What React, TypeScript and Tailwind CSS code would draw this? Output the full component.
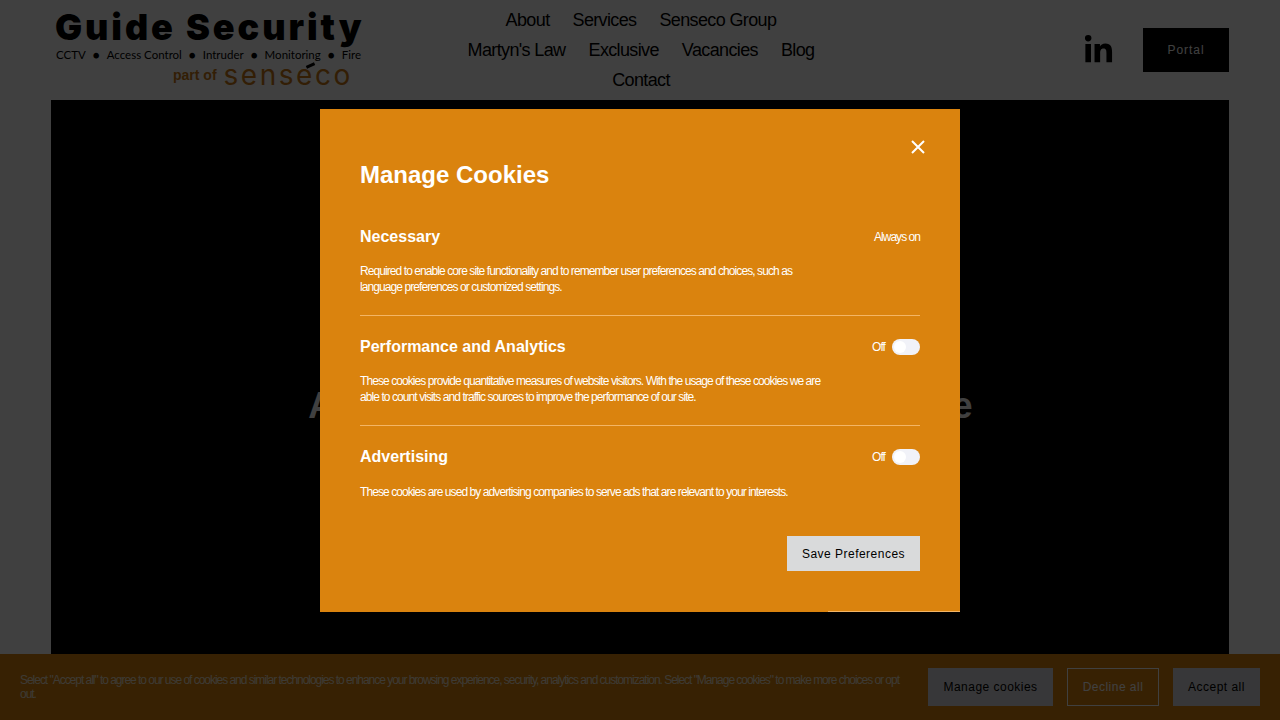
import React from "react";
import { FaLinkedinIn } from "react-icons/fa";

const navRows = [
  ["About", "Services", "Senseco Group"],
  ["Martyn's Law", "Exclusive", "Vacancies", "Blog"],
  ["Contact"],
];

const Toggle = () => (
  <div className="flex items-center gap-[7px]">
    <span className="text-xs tracking-[-0.08em] text-white">Off</span>
    <div className="h-4 w-7 rounded-full bg-[#f1f2f8] p-[2px]">
      <div className="h-3 w-3 rounded-full bg-white" />
    </div>
  </div>
);

const CookieRow = ({
  title,
  right,
  text,
  last,
}: {
  title: string;
  right: React.ReactNode;
  text: React.ReactNode;
  last?: boolean;
}) => (
  <div className={last ? "" : "h-[87px] border-b border-[#f3b565]"}>
    <div className="flex h-4 items-center justify-between">
      <h3 className="text-base font-bold text-white">{title}</h3>
      {right}
    </div>
    <p className={`${last ? "mt-[19px]" : "mt-[18px]"} w-[462px] text-xs leading-4 tracking-[-0.92px] text-white`}>{text}</p>
  </div>
);

const App = () => {
  return (
    <div className="relative h-[720px] overflow-hidden bg-white font-['Liberation_Sans',Arial,sans-serif]">
      <div className="mx-auto w-[1178px]">
        <header className="flex h-[100px] items-center">
          <div className="w-[312px] shrink-0 pl-1 pb-[7px]">
            <div className="font-['Inter',sans-serif] text-[36px] font-black leading-[36px] tracking-[0.081em] whitespace-nowrap text-black">
              Guide Security
            </div>
            <div className="mt-[3px] ml-px flex w-[305px] justify-between whitespace-nowrap font-['Lato',sans-serif] text-[11.5px] leading-[14px] text-black">
              <span>CCTV</span>
              <span>●</span>
              <span>Access Control</span>
              <span>●</span>
              <span>Intruder</span>
              <span>●</span>
              <span>Monitoring</span>
              <span>●</span>
              <span>Fire</span>
            </div>
            <div className="relative mt-[3px] flex items-center gap-[7px] pl-[118px] text-[#c97a16]">
              <span className="text-sm font-bold leading-5">part of</span>
              <span className="font-['Inter',sans-serif] text-[28px] leading-5 tracking-[0.09em]">senseco</span>
              <span className="absolute left-[251px] top-[-1px] h-[3px] w-[9px] -rotate-[25deg] bg-black" />
            </div>
          </div>

          <nav className="ml-[88px] flex w-[380px] flex-col items-center text-lg leading-[30px] tracking-[-0.035em] text-black">
            {navRows.map((row) => (
              <div key={row[0]} className="flex gap-[23px]">
                {row.map((item) => (
                  <a key={item}>{item}</a>
                ))}
              </div>
            ))}
          </nav>

          <div className="ml-auto flex items-center gap-[29px]">
            <FaLinkedinIn className="h-[31px] w-[31px] text-black" />
            <button className="h-11 w-[86px] bg-black text-xs tracking-[0.08em] text-white">
              Portal
            </button>
          </div>
        </header>

        <section className="flex h-[620px] items-start justify-center bg-black pt-[286px]">
          <h1 className="whitespace-nowrap text-[36px] font-bold leading-10 tracking-[-0.92px] text-white">
            Accredited Security Systems Nationwide
          </h1>
        </section>
      </div>

      <div className="absolute inset-x-0 bottom-0 flex h-[66px] items-center gap-[28px] bg-[#da830e] pl-5 pr-5">
        <p className="w-[880px] text-xs leading-[14px] tracking-[-1.03px] text-[#f3e6d2]">
          Select "Accept all" to agree to our use of cookies and similar technologies to enhance your browsing
          experience, security, analytics and customization. Select "Manage cookies" to make more choices or opt out.
        </p>
        <div className="flex gap-[14px] text-xs tracking-[0.04em]">
          <button className="h-[38px] w-[125px] bg-[#dcdce2] text-black">Manage cookies</button>
          <button className="h-[38px] w-[92px] border border-white text-white">Decline all</button>
          <button className="h-[38px] w-[87px] bg-[#dcdce2] text-black">Accept all</button>
        </div>
      </div>

      <div className="absolute inset-0 bg-black/75" />

      <div className="absolute left-[320px] top-[109px] h-[503px] w-[640px] bg-[#da830e] px-10 pt-[51px] text-white">
        <svg className="absolute right-[34px] top-[30px] h-4 w-4" viewBox="0 0 16 16" fill="none" stroke="white" strokeWidth="2">
          <path d="M2 2l12 12M14 2L2 14" />
        </svg>
        <h2 className="text-2xl font-bold leading-[30px]">Manage Cookies</h2>
        <div className="mt-[39px]">
          <CookieRow
            title="Necessary"
            right={<span className="text-xs tracking-[-0.08em] text-white">Always on</span>}
            text="Required to enable core site functionality and to remember user preferences and choices, such as language preferences or customized settings."
          />
          <div className="mt-[23px]">
            <CookieRow
              title="Performance and Analytics"
              right={<Toggle />}
              text="These cookies provide quantitative measures of website visitors. With the usage of these cookies we are able to count visits and traffic sources to improve the performance of our site."
            />
          </div>
          <div className="mt-[23px]">
            <CookieRow
              last
              title="Advertising"
              right={<Toggle />}
              text={<span className="whitespace-nowrap">These cookies are used by advertising companies to serve ads that are relevant to your interests.</span>}
            />
          </div>
        </div>
        <div className="mt-[36px] flex justify-end">
          <button className="h-[35px] w-[133px] bg-[#d9dadb] text-xs tracking-[0.04em] text-black">
            Save Preferences
          </button>
        </div>
        <div className="absolute bottom-0 right-0 h-px w-[132px] bg-[#f3b565]" />
      </div>
    </div>
  );
};

export default App;
